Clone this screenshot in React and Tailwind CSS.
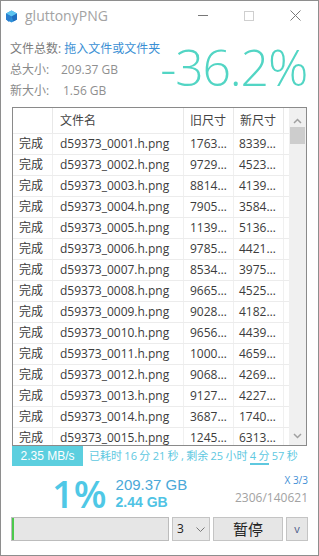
import React from 'react';

const rows = [
  ['0001', '1763…', '8339…'],
  ['0002', '9729…', '4523…'],
  ['0003', '8814…', '4139…'],
  ['0004', '7905…', '3584…'],
  ['0005', '1139…', '5136…'],
  ['0006', '9785…', '4421…'],
  ['0007', '8534…', '3975…'],
  ['0008', '9665…', '4525…'],
  ['0009', '9028…', '4182…'],
  ['0010', '9656…', '4439…'],
  ['0011', '1000…', '4659…'],
  ['0012', '9068…', '4269…'],
  ['0013', '9127…', '4227…'],
  ['0014', '3687…', '1740…'],
  ['0015', '1245…', '6313…'],
];

const Logo = () => (
  <svg width="13" height="13" viewBox="0 0 13 13">
    <polygon points="6.5,0.5 12,3.5 12,9.5 6.5,12.5 1,9.5 1,3.5" fill="#2d8fd8" />
    <polygon points="6.5,0.5 12,3.5 6.5,6.5 1,3.5" fill="#5cc4f0" />
    <polygon points="1,3.5 6.5,6.5 4,12 1,9.5" fill="#2a7fcf" />
    <polygon points="12,3.5 12,9.5 8.5,11.5 6.5,6.5" fill="#1f6fc0" />
  </svg>
);

const App = () => {
  return (
    <div className="w-[319px] h-[556px] bg-white border border-[#8e8e8e] flex flex-col font-['Open_Sans','Noto_Sans_CJK_SC',sans-serif] text-[12px] overflow-hidden">
      {/* Title bar */}
      <div className="h-[29px] flex items-center shrink-0">
        <div className="pl-[4px] pt-[1px]"><Logo /></div>
        <span className="ml-[7px] text-[14px] text-[#a3a3a3] leading-none">gluttonyPNG</span>
        <div className="ml-auto flex items-center h-full">
          <div className="w-[46px] flex justify-center"><div className="w-[10px] h-px bg-[#777]"></div></div>
          <div className="w-[46px] flex justify-center"><div className="w-[10px] h-[10px] border border-[#cfcfcf]"></div></div>
          <div className="w-[46px] flex justify-center">
            <svg width="11" height="11" viewBox="0 0 11 11"><path d="M0.5 0.5L10.5 10.5M10.5 0.5L0.5 10.5" stroke="#7a7a7a" strokeWidth="1" /></svg>
          </div>
        </div>
      </div>

      {/* Info */}
      <div className="flex h-[77px] shrink-0">
        <div className="pl-[9px] pt-[12px] flex flex-col gap-[8px] leading-[13px] whitespace-nowrap shrink-0">
          <div><span className="text-[#7b7b7b]">文件总数:</span> <span className="text-[#3a8fd4]">拖入文件或文件夹</span></div>
          <div className="flex"><span className="text-[#8a8a8a] w-[51px]">总大小:</span><span className="text-[#8f8f8f]">209.37 GB</span></div>
          <div className="flex"><span className="text-[#8a8a8a] w-[53px]">新大小:</span><span className="text-[#8f8f8f]">1.56 GB</span></div>
        </div>
        <div className="ml-auto pr-[12px] pt-[12px] text-[50px] font-light leading-none text-[#52d5c4] tracking-[-1.2px] whitespace-nowrap">-36.2%</div>
      </div>

      {/* Table */}
      <div className="mx-[11px] h-[339px] shrink-0 border border-[#8a8a8a] flex overflow-hidden text-[#3c3c3c]">
        <div className="flex-1 flex flex-col overflow-hidden">
          <div className="h-[25px] shrink-0 flex items-center text-[#444]">
            <div className="w-[40px] h-full border-r border-[#e8e8e8]"></div>
            <div className="w-[131px] h-full pl-[7px] flex items-center border-r border-[#e8e8e8]">文件名</div>
            <div className="w-[50px] h-full pl-[6px] flex items-center border-r border-[#e8e8e8]">旧尺寸</div>
            <div className="w-[50px] h-full pl-[6px] flex items-center border-r border-[#e8e8e8]">新尺寸</div>
          </div>
          {rows.map((r) => (
            <div key={r[0]} className="h-[21px] shrink-0 flex items-center border-t border-[#ececec]">
              <div className="w-[40px] h-full pl-[6px] flex items-center border-r border-[#f0f0f0]">完成</div>
              <div className="w-[131px] h-full pl-[7px] flex items-center border-r border-[#f0f0f0]">d59373_{r[0]}.h.png</div>
              <div className="w-[50px] h-full pl-[6px] flex items-center border-r border-[#f0f0f0]">{r[1]}</div>
              <div className="w-[50px] h-full pl-[5px] flex items-center border-r border-[#f0f0f0]">{r[2]}</div>
            </div>
          ))}
        </div>
        <div className="w-[17px] shrink-0 bg-[#f0f0f0] flex flex-col items-center">
          <div className="h-[18px] w-full flex items-end justify-center pb-[2px]">
            <svg width="9" height="6" viewBox="0 0 9 6"><path d="M1 5L4.5 1.5L8 5" stroke="#a0a0a0" strokeWidth="1.5" fill="none" /></svg>
          </div>
          <div className="w-[15px] h-[17px] bg-[#cdcdcd] mt-[1px]"></div>
          <div className="mt-auto h-[18px] w-full flex items-center justify-center">
            <svg width="9" height="6" viewBox="0 0 9 6"><path d="M1 1L4.5 4.5L8 1" stroke="#a0a0a0" strokeWidth="1.5" fill="none" /></svg>
          </div>
        </div>
      </div>

      {/* Speed */}
      <div className="mx-[11px] h-[20px] shrink-0 flex items-center whitespace-nowrap">
        <div className="w-[71px] shrink-0 h-full bg-[#5ccfdf] text-white flex items-center justify-center font-['Liberation_Sans',sans-serif] text-[12px]">2.35 MB/s</div>
        <div className="ml-[6px] text-[#5ec8df] text-[11px] [word-spacing:-0.5px]">
          已耗时 16 分 21 秒 , 剩余 25 小时 <span className="border-b-2 border-[#5ec8df]">4 分</span> 57 秒
        </div>
      </div>

      {/* Summary */}
      <div className="flex h-[51px] shrink-0">
        <div className="pl-[51px] pt-[8px] text-[38px] font-semibold leading-none text-[#4fc8e6]">1%</div>
        <div className="pl-[9px] pt-[11px] flex flex-col font-['Liberation_Sans',sans-serif]">
          <span className="text-[15px] leading-[15px] text-[#4aa8d8]">209.37 GB</span>
          <span className="text-[14px] leading-[14px] mt-[3px] font-bold text-[#4fc3e4]">2.44 GB</span>
        </div>
        <div className="ml-auto pr-[10px] pt-[9px] flex flex-col items-end leading-none">
          <span className="text-[10px] text-[#3f8fd6]">X 3/3</span>
          <span className="text-[12px] text-[#a2a2a2] mt-[7px]">2306/140621</span>
        </div>
      </div>

      {/* Controls */}
      <div className="mx-[10px] h-[24px] shrink-0 flex gap-[3px]">
        <div className="flex-1 border border-[#bcbcbc] bg-[#e6e6e6] flex">
          <div className="w-[2px] h-full bg-[#4cc94c]"></div>
        </div>
        <div className="w-[38px] border border-[#c4c4c4] bg-[#e8e8e8] flex items-center pl-[4px] pr-[4px] text-[#222]">
          <span>3</span>
          <svg className="ml-auto" width="9" height="5" viewBox="0 0 9 5"><path d="M0.5 0.5L4.5 4.5L8.5 0.5" stroke="#777" fill="none" /></svg>
        </div>
        <div className="w-[70px] border border-[#c4c4c4] bg-[#e6e6e6] flex items-center justify-center text-[15px] text-[#222]">暂停</div>
        <div className="w-[22px] border border-[#c4c4c4] bg-[#e6e6e6] flex items-center justify-center text-[11px] text-[#4a5a8a]">v</div>
      </div>
    </div>
  );
};

export default App;
